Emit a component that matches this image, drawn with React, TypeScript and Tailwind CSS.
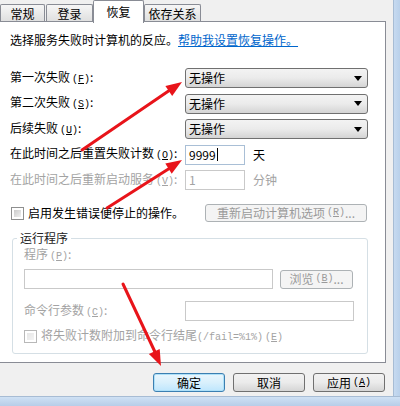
import React from "react";

const SANS = "font-['Noto_Sans_CJK_SC','Liberation_Sans',sans-serif]";

function Key({ k }: { k: string }) {
  return (
    <span className="ml-[2px] font-['Liberation_Mono',monospace] text-[10px]">
      (<u>{k}</u>)
    </span>
  );
}

function Tab({ label, active = false, w }: { label: string; active?: boolean; w: string }) {
  if (active) {
    return (
      <div
        className={`${w} h-[23px] -mb-px z-10 flex items-center justify-center rounded-t-[2px] border border-b-0 border-[#898c95] bg-white text-[12px] text-black`}
      >
        {label}
      </div>
    );
  }
  return (
    <div
      className={`${w} h-[18px] flex items-center justify-center rounded-t-[2px] border border-b-0 border-[#898c95] bg-gradient-to-b from-[#f6f6f6] to-[#dedede] text-[12px] text-black`}
    >
      {label}
    </div>
  );
}

function Combo() {
  return (
    <div className="w-[183px] h-[20px] flex items-center rounded-[3px] border border-[#707070] bg-gradient-to-b from-[#f3f3f3] via-[#ebebeb] to-[#d4d4d4] pl-[3px] pr-[5px] text-[12px] text-black">
      <span className="flex-1">无操作</span>
      <svg width="8" height="5" viewBox="0 0 8 5">
        <path d="M0 0 H8 L4 5 Z" fill="#000" />
      </svg>
    </div>
  );
}

function Row({ children, label, disabled = false }: { children: React.ReactNode; label: React.ReactNode; disabled?: boolean }) {
  return (
    <div className="flex h-[20px] items-center">
      <div className={`w-[185px] pl-[10px] text-[12px] ${disabled ? "text-[#a3a3a3]" : "text-black"}`}>{label}</div>
      {children}
    </div>
  );
}

function Check({ disabled = false }: { disabled?: boolean }) {
  return (
    <div
      className={`w-[13px] h-[13px] border ${disabled ? "border-[#b8b8b8]" : "border-[#8e8f8f]"} bg-white p-[2px]`}
    >
      <div className={`w-full h-full bg-gradient-to-br ${disabled ? "from-[#e6e6e6] to-[#f4f4f4]" : "from-[#cbcbcb] to-[#f0f0f0]"}`} />
    </div>
  );
}

function Btn({ children, w, disabled = false, primary = false }: { children: React.ReactNode; w: string; disabled?: boolean; primary?: boolean }) {
  const tone = primary
    ? "border-[#3c7fb1] bg-gradient-to-b from-[#eaf6fd] via-[#d9f0fc] to-[#bee6fd] text-black shadow-[inset_0_0_0_1px_#aee0f8]"
    : disabled
    ? "border-[#adb2b5] bg-[#f4f4f4] text-[#9a9a9a]"
    : "border-[#707070] bg-gradient-to-b from-[#f2f2f2] via-[#ebebeb] to-[#d5d5d5] text-black";
  return (
    <div className={`${w} flex items-center justify-center rounded-[3px] border text-[12px] ${tone}`}>
      {children}
    </div>
  );
}

export default function App() {
  return (
    <div className={`relative w-[400px] h-[406px] overflow-hidden bg-[#f0f0f0] ${SANS} leading-[16px]`}>
      <div className="flex h-[396px]">
        <div className="flex w-[393px] flex-col">
          {/* tab strip */}
          <div className="flex h-[22px] items-end">
            <Tab label="常规" w="w-[45px]" />
            <div className="w-[1px]" />
            <Tab label="登录" w="w-[47px]" />
            <Tab label="恢复" active w="w-[51px]" />
            <Tab label="依存关系" w="w-[57px]" />
          </div>

          {/* recovery page */}
          <div className="mr-[7px] h-[342px] -mt-px border border-l-0 border-[#898c95] bg-white">
            <div className="pt-[10px] pl-[10px] text-[12px] text-black">
              选择服务失败时计算机的反应。
              <span className="text-[#0066cc] underline">帮助我设置恢复操作。</span>
            </div>

            <div className="mt-[20px] flex flex-col gap-[5.5px]">
              <Row label={<>第一次失败<Key k="F" />:</>}>
                <Combo />
              </Row>
              <Row label={<>第二次失败<Key k="S" />:</>}>
                <Combo />
              </Row>
              <Row label={<>后续失败<Key k="U" />:</>}>
                <Combo />
              </Row>
              <Row label={<>在此时间之后重置失败计数<Key k="O" />:</>}>
                <div className="flex h-[20px] w-[60px] items-center border border-[#a9bfd6] bg-white pl-[3px] text-[12px] text-black">
                  9999<span className="ml-px h-[13px] w-px bg-black" />
                </div>
                <span className="ml-[8px] text-[12px] text-black">天</span>
              </Row>
              <Row disabled label={<>在此时间之后重新启动服务<Key k="V" />:</>}>
                <div className="flex h-[20px] w-[60px] items-center border border-[#c9c9c9] bg-white pl-[3px] text-[12px] text-[#a3a3a3]">
                  1
                </div>
                <span className="ml-[8px] text-[12px] text-[#a3a3a3]">分钟</span>
              </Row>
            </div>

            <div className="mt-[14px] flex h-[18px] items-center pl-[11px]">
              <Check />
              <span className="ml-[4px] text-[12px] text-black">启用发生错误便停止的操作。</span>
              <div className="ml-auto mr-[18px] flex h-[18px]">
                <Btn w="w-[162px]" disabled>
                  重新启动计算机选项<Key k="R" />...
                </Btn>
              </div>
            </div>

            <fieldset className="ml-[12px] mt-[8px] w-[356px] rounded-[3px] border border-[#d5dfe5] pb-[10px]">
              <legend className="ml-[4px] px-[3px] text-[12px] text-[#222]">运行程序</legend>
              <div className="pl-[11px] text-[12px] text-[#a3a3a3]">
                程序<Key k="P" />:
              </div>
              <div className="mt-[4px] flex h-[20px] items-center pl-[11px]">
                <div className="h-[20px] w-[249px] border border-[#c9c9c9] bg-white" />
                <div className="ml-[7px] flex h-[19px]">
                  <Btn w="w-[73px]" disabled>
                    浏览<Key k="B" />...
                  </Btn>
                </div>
              </div>
              <div className="mt-[12px] flex h-[20px] items-center pl-[11px]">
                <div className="w-[161px] text-[12px] text-[#a3a3a3]">
                  命令行参数<Key k="C" />:
                </div>
                <div className="h-[20px] w-[169px] border border-[#c9c9c9] bg-white" />
              </div>
              <div className="mt-[9px] flex h-[13px] items-center pl-[11px]">
                <Check disabled />
                <span className="ml-[4px] whitespace-nowrap text-[12px] text-[#a3a3a3]">
                  将失败计数附加到命令行结尾
                  <span className="font-['Liberation_Mono',monospace] text-[10px]">(/fail=%1%)</span>
                  <Key k="E" />
                </span>
              </div>
            </fieldset>
          </div>

          {/* dialog buttons */}
          <div className="flex flex-1 items-start justify-end gap-[8px] pr-[8px] pt-[10px]">
            <div className="flex h-[19px]">
              <Btn w="w-[72px]" primary>确定</Btn>
            </div>
            <div className="flex h-[19px]">
              <Btn w="w-[72px]">取消</Btn>
            </div>
            <div className="flex h-[19px]">
              <Btn w="w-[72px]">
                应用<Key k="A" />
              </Btn>
            </div>
          </div>
        </div>
        {/* window frame, right side */}
        <div className="flex-1 border-l border-[#a7bcd4] bg-gradient-to-r from-[#c6daf0] to-[#b9d0ea]" />
      </div>
      {/* window frame, bottom */}
      <div className="h-[10px] border-t border-[#a7bcd4] bg-gradient-to-b from-[#cfe1f4] to-[#b7cde8]" />

      {/* red annotation arrows */}
      <svg className="pointer-events-none absolute inset-0" width="400" height="406" viewBox="0 0 400 406">
        <g stroke="#e8141a" strokeWidth="3" strokeLinecap="round">
          <line x1="82" y1="150" x2="170" y2="90" />
          <line x1="107" y1="208" x2="170" y2="168" />
          <line x1="123" y1="284" x2="155" y2="352" />
        </g>
        <g fill="#e8141a">
          <polygon points="182,82 172.2,96 165.4,86" />
          <polygon points="182,160 171.7,173.7 165.3,163.5" />
          <polygon points="161,366 159.7,349 148.9,354" />
        </g>
      </svg>
    </div>
  );
}
